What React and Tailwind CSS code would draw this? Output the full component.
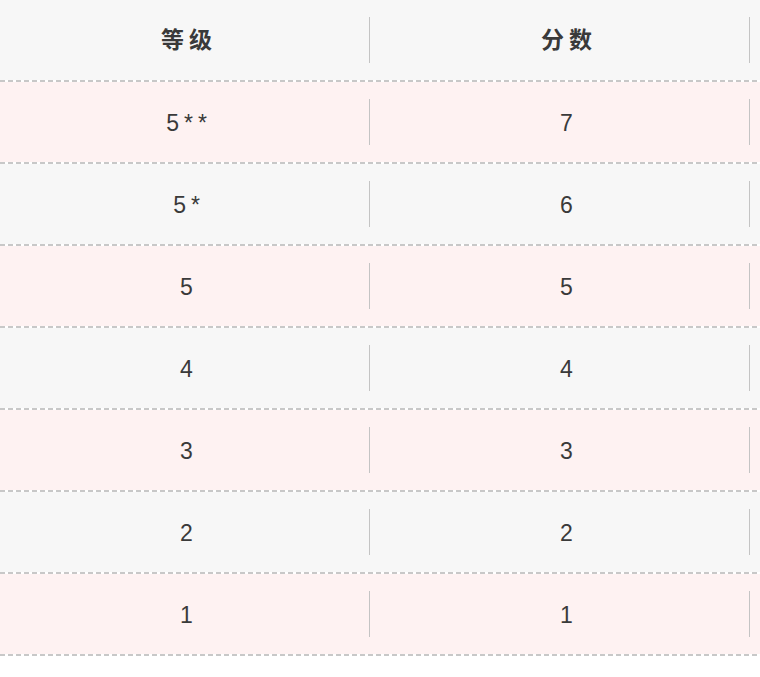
const rows = [
  { grade: '5**', score: '7' },
  { grade: '5*', score: '6' },
  { grade: '5', score: '5' },
  { grade: '4', score: '4' },
  { grade: '3', score: '3' },
  { grade: '2', score: '2' },
  { grade: '1', score: '1' },
];

function Dashed() {
  return (
    <div className="h-[2px] w-full bg-[repeating-linear-gradient(to_right,#c8c8c8_0_5px,transparent_5px_8px)]" />
  );
}

function Cell({ children, head }) {
  return (
    <div className="flex w-[380px] items-center">
      <div
        className={`flex-1 pl-[9px] text-center tracking-[5px] text-[#3a3a3a] ${
          head ? 'pt-[1px] text-[23px] font-semibold' : 'pt-[3px] text-[23px]'
        }`}
      >
        {children}
      </div>
      <div className="h-[46px] w-px bg-[#c4c4c4]" />
      <div className="w-[10px]" />
    </div>
  );
}

export default function App() {
  return (
    <div
      className="min-h-[677px] w-[760px] bg-white"
      style={{ fontFamily: '"Liberation Sans", "Noto Sans CJK SC", sans-serif' }}
    >
      <div className="flex h-[80px] bg-[#f7f7f7]">
        <Cell head>等级</Cell>
        <Cell head>分数</Cell>
      </div>
      <Dashed />
      {rows.map((r, i) => (
        <div key={r.grade}>
          <div className={`flex h-[80px] ${i % 2 === 0 ? 'bg-[#fef2f2]' : 'bg-[#f7f7f7]'}`}>
            <Cell>{r.grade}</Cell>
            <Cell>{r.score}</Cell>
          </div>
          <Dashed />
        </div>
      ))}
    </div>
  );
}
